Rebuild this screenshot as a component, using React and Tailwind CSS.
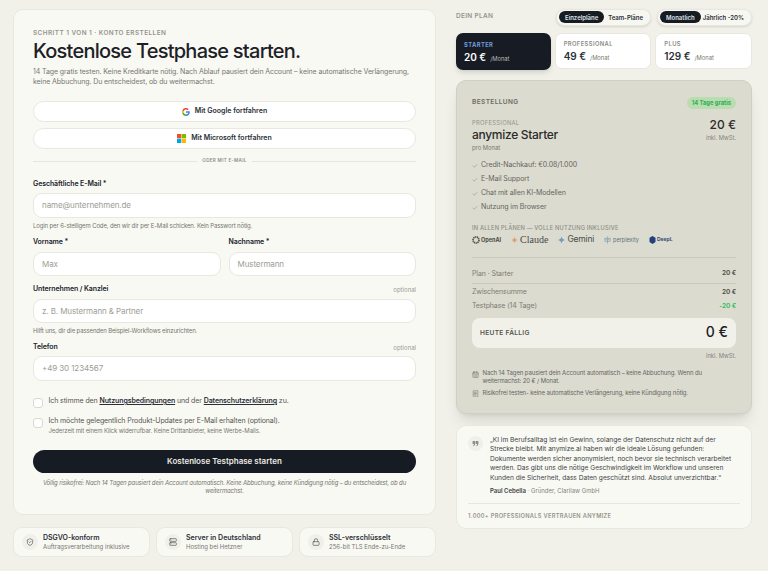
import React from "react";
import { ShieldCheck, Server, Lock, CalendarDays, ReceiptText, Check } from "lucide-react";

function Field({ label, optional, placeholder }) {
  return (
    <div className="flex min-w-0 flex-1 flex-col">
      <div className="flex h-[12px] items-center justify-between">
        <span className="text-[7px] font-semibold tracking-[-0.1px] text-[#20242c]">{label}</span>
        {optional && <span className="text-[6px] text-[#9a9a92]">optional</span>}
      </div>
      <div className="mt-[3px] flex h-[24.5px] items-center rounded-[9px] border border-[#e8e8e0] bg-white px-2 text-[8px] tracking-[-0.1px] text-[#9d9d96]">
        {placeholder}
      </div>
    </div>
  );
}

function Hint({ children }) {
  return <p className="mt-[3px] h-[9px] text-[6px] leading-[9px] tracking-[-0.13px] text-[#75756e]">{children}</p>;
}

function Google() {
  return (
    <svg width="8" height="8" viewBox="0 0 24 24">
      <path fill="#4285F4" d="M23.5 12.3c0-.8-.1-1.6-.2-2.300H12v4.500h6.500a5.500 5.500 0 0 1-2.400 3.600v3h3.900c2.200-2.100 3.500-5.200 3.500-8.800z" />
      <path fill="#34A853" d="M12 24c3.200 0 6-1.100 8-2.900l-3.900-3c-1.100.7-2.500 1.200-4.100 1.200-3.100 0-5.800-2.100-6.700-5H1.300v3.100A12 12 0 0 0 12 24z" />
      <path fill="#FBBC05" d="M5.300 14.300a7.200 7.200 0 0 1 0-4.600V6.600H1.300a12 12 0 0 0 0 10.800z" />
      <path fill="#EA4335" d="M12 4.800c1.800 0 3.400.6 4.600 1.800l3.400-3.400A12 12 0 0 0 1.300 6.600l4 3.100c.9-2.800 3.600-4.900 6.700-4.900z" />
    </svg>
  );
}

function Microsoft() {
  return (
    <svg width="9" height="9" viewBox="0 0 20 20">
      <rect width="9.500" height="9.500" fill="#F25022" />
      <rect x="10.500" width="9.500" height="9.500" fill="#7FBA00" />
      <rect y="10.500" width="9.500" height="9.500" fill="#00A4EF" />
      <rect x="10.500" y="10.500" width="9.500" height="9.500" fill="#FFB900" />
    </svg>
  );
}

function SocialButton({ icon, children }) {
  return (
    <div className="flex h-[21px] items-center justify-center gap-[5px] rounded-full border border-[#e8e8e0] bg-white text-[7px] font-semibold text-[#2b2f36]">
      {icon}
      <span>{children}</span>
    </div>
  );
}

function Badge({ icon, title, sub }) {
  return (
    <div className="flex h-[30px] flex-1 items-center gap-[5px] rounded-[9px] border border-[#e8e8e0] bg-[#f9f9f4] pl-[8px]">
      <div className="flex h-[16px] w-[16px] items-center justify-center rounded-full bg-[#f0f0ea] text-[#55554f]">{icon}</div>
      <div className="flex flex-col">
        <span className="text-[7px] font-semibold leading-[10px] text-[#2b2f36]">{title}</span>
        <span className="text-[6px] leading-[8px] text-[#77776f]">{sub}</span>
      </div>
    </div>
  );
}

function Plan({ name, price, active }) {
  return (
    <div
      className={
        active
          ? "flex h-[37px] flex-1 flex-col justify-center rounded-[7px] bg-[#171c24] pl-[8px] shadow-md"
          : "flex h-[36px] flex-1 flex-col justify-center rounded-[7px] border border-[#e8e8e0] bg-white pl-[8px]"
      }
    >
      <span className={active ? "text-[5.800px] font-bold leading-[9px] tracking-[0.4px] text-[#6e9bdb]" : "text-[5.800px] font-semibold leading-[9px] tracking-[0.4px] text-[#8b8b84]"}>
        {name}
      </span>
      <span className={active ? "mt-[2px] flex items-baseline gap-[4px] text-white" : "mt-[2px] flex items-baseline gap-[4px] text-[#2b2f36]"}>
        <span className="text-[10px] font-semibold leading-[13px]">{price}</span>
        <span className={active ? "text-[5.800px] text-[#b8b8b2]" : "text-[5.800px] text-[#77776f]"}>/Monat</span>
      </span>
    </div>
  );
}

function Toggle({ on, off }) {
  return (
    <div className="flex h-[17px] w-[95px] items-center justify-between whitespace-nowrap rounded-full border border-[#e8e8e0] bg-[#f7f7f2] pl-[2px] pr-[7px] text-[6px] font-semibold text-[#2b2f36] shadow-sm">
      <span className="flex h-[12px] items-center rounded-full bg-[#171c24] px-[6px] text-[#dfe3ea]">{on}</span>
      <span>{off}</span>
    </div>
  );
}

function Row({ label, value, green, className }) {
  return (
    <div className={"flex items-center justify-between text-[7px] tracking-[-0.1px] " + className}>
      <span className="text-[#7b7b72]">{label}</span>
      <span className={green ? "text-[6.500px] font-semibold text-[#2ebd59]" : "text-[6.500px] font-semibold text-[#4a4a45]"}>{value}</span>
    </div>
  );
}

function Feature({ children }) {
  return (
    <div className="flex h-[13.800px] items-center gap-[3px] text-[7px] tracking-[-0.1px] text-[#66665e]">
      <Check size={6} className="mt-[2px] text-[#85857b]" strokeWidth={2} />
      <span>{children}</span>
    </div>
  );
}

export default function App() {
  return (
    <div className="h-[571px] w-[768px] overflow-hidden bg-[#f1f1ea] pl-[13px] pr-[16px] pt-[9px] font-['Inter',sans-serif]">
      <div className="flex items-start gap-[20px]">
        <div className="flex w-[423px] flex-col">
          <section className="flex h-[505.500px] flex-col rounded-[10px] border border-[#e8e8e0] bg-[#f9f9f4] px-[19px] pt-[18px]">
            <p className="text-[6.400px] font-semibold leading-[10px] tracking-[0.45px] text-[#94948c]">SCHRITT 1 VON 1 · KONTO ERSTELLEN</p>
            <h1 className="text-[20px] font-medium leading-[26px] tracking-[-0.75px] text-[#1c2027]">Kostenlose Testphase starten.</h1>
            <p className="mt-[3px] text-[7px] leading-[10px] tracking-[-0.1px] text-[#77776f]">
              14 Tage gratis testen. Keine Kreditkarte nötig. Nach Ablauf pausiert dein Account – keine automatische Verlängerung,<br />
              keine Abbuchung. Du entscheidest, ob du weitermachst.
            </p>
            <div className="mt-[14px] flex flex-col gap-[6px]">
              <SocialButton icon={<Google />}>Mit Google fortfahren</SocialButton>
              <SocialButton icon={<Microsoft />}>Mit Microsoft fortfahren</SocialButton>
            </div>
            <div className="mt-[8px] flex h-[9px] items-center gap-[5px]">
              <div className="h-px flex-1 bg-[#e6e6de]" />
              <span className="text-[4.600px] font-semibold tracking-[0.3px] text-[#8e8e86]">ODER MIT E-MAIL</span>
              <div className="h-px flex-1 bg-[#e6e6de]" />
            </div>

            <div className="mt-[12px]">
              <Field label="Geschäftliche E-Mail *" placeholder="name@unternehmen.de" />
              <Hint>Login per 6-stelligem Code, den wir dir per E-Mail schicken. Kein Passwort nötig.</Hint>
            </div>
            <div className="mt-[7px] flex gap-[8px]">
              <Field label="Vorname *" placeholder="Max" />
              <Field label="Nachname *" placeholder="Mustermann" />
            </div>
            <div className="mt-[7.500px]">
              <Field label="Unternehmen / Kanzlei" optional placeholder="z. B. Mustermann & Partner" />
              <Hint>Hilft uns, dir die passenden Beispiel-Workflows einzurichten.</Hint>
            </div>
            <div className="mt-[6px]">
              <Field label="Telefon" optional placeholder="+49 30 1234567" />
            </div>

            <div className="mt-[15.500px] flex h-[12px] gap-[5.500px]">
              <div className="mt-[2px] h-[10px] w-[10px] rounded-[3px] border border-[#d9d9d0] bg-white" />
              <p className="text-[7px] leading-[10px] tracking-[-0.1px] text-[#55554f]">
                Ich stimme den <span className="font-semibold text-[#2b2f36] underline">Nutzungsbedingungen</span> und der{" "}
                <span className="font-semibold text-[#2b2f36] underline">Datenschutzerklärung</span> zu.
              </p>
            </div>
            <div className="mt-[7.500px] flex gap-[5.500px]">
              <div className="mt-[2px] h-[10px] w-[10px] rounded-[3px] border border-[#d9d9d0] bg-white" />
              <div>
                <p className="text-[7px] leading-[10px] tracking-[-0.1px] text-[#55554f]">Ich möchte gelegentlich Produkt-Updates per E-Mail erhalten (optional).</p>
                <p className="text-[6px] leading-[9px] tracking-[-0.1px] text-[#77776f]">Jederzeit mit einem Klick widerrufbar. Keine Drittanbieter, keine Werbe-Mails.</p>
              </div>
            </div>

            <div className="mt-[15px] flex h-[23.500px] items-center justify-center rounded-full bg-[#171c24] text-[8px] font-semibold text-[#eceae4]">
              Kostenlose Testphase starten
            </div>
            <p className="mx-[6px] mt-[6px] text-center text-[6px] italic leading-[8px] tracking-[-0.13px] text-[#77776f]">
              Völlig risikofrei: Nach 14 Tagen pausiert dein Account automatisch. Keine Abbuchung, keine Kündigung nötig – du entscheidest, ob du weitermachst.
            </p>
          </section>

          <div className="mt-[12px] flex gap-[6px]">
            <Badge icon={<ShieldCheck size={8} />} title="DSGVO-konform" sub="Auftragsverarbeitung inklusive" />
            <Badge icon={<Server size={8} />} title="Server in Deutschland" sub="Hosting bei Hetzner" />
            <Badge icon={<Lock size={8} />} title="SSL-verschlüsselt" sub="256-bit TLS Ende-zu-Ende" />
          </div>
        </div>

        <div className="flex w-[296px] flex-col">
          <div className="flex h-[16px] items-center justify-between">
            <span className="text-[6.500px] font-semibold tracking-[0.3px] text-[#94948c]">DEIN PLAN</span>
            <div className="flex gap-[6px]">
              <Toggle on="Einzelpläne" off="Team-Pläne" />
              <Toggle on="Monatlich" off="Jährlich -20%" />
            </div>
          </div>

          <div className="mt-[8px] flex items-start gap-[4px]">
            <Plan name="STARTER" price="20 €" active />
            <Plan name="PROFESSIONAL" price="49 €" />
            <Plan name="PLUS" price="129 €" />
          </div>

          <section className="mt-[10px] flex h-[334px] flex-col rounded-[10px] border border-[#cfcfc3] bg-[#dbdbd0] px-[15px] pt-[16px] shadow-lg">
            <div className="flex h-[12px] items-center justify-between">
              <span className="text-[6.500px] font-semibold tracking-[0.4px] text-[#6c6c64]">BESTELLUNG</span>
              <span className="flex h-[12px] items-center rounded-full bg-[#b9dcb0] px-[5px] text-[5.800px] font-bold text-[#2fae55]">14 Tage gratis</span>
            </div>
            <div className="mt-[9.500px] flex justify-between">
              <div className="flex flex-col">
                <span className="text-[5.800px] leading-[8px] tracking-[0.3px] text-[#94948a]">PROFESSIONAL</span>
                <span className="text-[12px] font-medium leading-[15px] tracking-[-0.3px] text-[#2b2b29]">anymize Starter</span>
                <span className="mt-[1px] text-[5.800px] leading-[9px] text-[#77776e]">pro Monat</span>
              </div>
              <div className="flex flex-col items-end">
                <span className="-mt-[1.500px] text-[12px] font-medium leading-[16px] text-[#2b2b29]">20 €</span>
                <span className="text-[5.800px] leading-[9px] text-[#85857b]">inkl. MwSt.</span>
              </div>
            </div>

            <div className="mt-[7px] flex flex-col">
              <Feature>Credit-Nachkauf: €0.08/1.000</Feature>
              <Feature>E-Mail Support</Feature>
              <Feature>Chat mit allen KI-Modellen</Feature>
              <Feature>Nutzung im Browser</Feature>
            </div>

            <p className="mt-[10px] text-[5.700px] font-medium leading-[8px] tracking-[0.2px] text-[#8e8e84]">IN ALLEN PLÄNEN — VOLLE NUTZUNG INKLUSIVE</p>
            <div className="mt-[2px] flex h-[12px] items-center gap-[10px] text-[#4a4a47]">
              <span className="flex items-center gap-[1px] text-[5.500px] font-bold">
                <svg width="8" height="8" viewBox="0 0 24 24"><circle cx="12" cy="12" r="9" fill="none" stroke="#55554f" strokeWidth="5" strokeDasharray="4 1.500" /></svg>
                OpenAI
              </span>
              <span className="flex items-center gap-[2px] font-['Liberation_Serif',serif] text-[10px]">
                <svg width="7" height="8" viewBox="0 0 24 24"><path d="M12 1l2.500 8 8-2.500-6 5.500 6 5.500-8-2.500-2.500 8-2.500-8-8 2.500 6-5.500-6-5.500 8 2.500z" fill="#dd9a72" /></svg>
                Claude
              </span>
              <span className="flex items-center gap-[2px] text-[8.500px] tracking-[-0.2px]">
                <svg width="7" height="8" viewBox="0 0 24 24"><path d="M12 0c1 7 4 10.500 12 12-8 1.500-11 5-12 12-1-7-4-10.500-12-12 8-1.500 11-5 12-12z" fill="#3f9be8" /><path d="M12 6c.5 3.500 2 5 6 6-4 1-5.500 2.500-6 6-.5-3.500-2-5-6-6 4-1 5.500-2.500 6-6z" fill="#e58a5a" /></svg>
                Gemini
              </span>
              <span className="flex items-center gap-[2px] text-[5.500px] text-[#64707a]">
                <svg width="7" height="8" viewBox="0 0 20 24" fill="none" stroke="#7fa3ad" strokeWidth="2"><path d="M10 1v22M2 7h16v9H2zM2 7l8 6 8-6" /></svg>
                perplexity
              </span>
              <span className="flex items-center gap-[1px] text-[5px] font-bold text-[#3c4f78]">
                <svg width="7" height="8" viewBox="0 0 20 24"><path d="M10 0l9 5v13l-9 6-9-6V5z" fill="#23407a" /></svg>
                DeepL
              </span>
            </div>

            <div className="mt-[11.500px] border-t border-[#c9c9bd] pt-[7px]">
              <Row label="Plan · Starter" value="20 €" className="h-[19px] border-b border-[#c9c9bd]" />
              <Row label="Zwischensumme" value="20 €" className="h-[17px]" />
              <Row label="Testphase (14 Tage)" value="-20 €" green className="h-[11px]" />
            </div>

            <div className="mt-[6px] flex h-[29.500px] items-center justify-between rounded-[8px] bg-[#f1f1ea] px-[8px]">
              <span className="mt-[3px] text-[6.600px] font-semibold tracking-[0.3px] text-[#55554f]">HEUTE FÄLLIG</span>
              <span className="-mt-[3px] text-[14px] font-medium text-[#1c2027]">0 €</span>
            </div>
            <p className="mt-[3px] text-right text-[5.800px] leading-[9px] text-[#85857b]">inkl. MwSt.</p>

            <div className="mt-[9px] flex gap-[3.500px]">
              <CalendarDays size={7} className="mt-[2px] shrink-0 text-[#77776e]" />
              <p className="text-[6px] leading-[8px] tracking-[-0.1px] text-[#66665e]">
                Nach 14 Tagen pausiert dein Account automatisch – keine Abbuchung. Wenn du weitermachst: 20 € / Monat.
              </p>
            </div>
            <div className="mt-[4px] flex gap-[3.500px]">
              <ReceiptText size={7} className="mt-[1px] shrink-0 text-[#77776e]" />
              <p className="text-[6px] leading-[8px] tracking-[-0.1px] text-[#66665e]">Risikofrei testen- keine automatische Verlängerung, keine Kündigung nötig.</p>
            </div>
          </section>

          <section className="mt-[11px] flex h-[103.500px] flex-col rounded-[10px] border border-[#e8e8e0] bg-[#f9f9f4] px-[11px] pt-[9.500px]">
            <div className="flex gap-[7px]">
              <div className="flex h-[15px] w-[15px] shrink-0 items-center justify-center rounded-full bg-[#f0f0ea]">
                <svg width="7" height="7" viewBox="0 0 24 24" fill="#8e8e86"><path d="M2 3h9v10a8 8 0 0 1-6 8l-1-3c2-.5 3-2 3-4H2zM13 3h9v10a8 8 0 0 1-6 8l-1-3c2-.5 3-2 3-4h-5z" /></svg>
              </div>
              <div>
                <p className="whitespace-nowrap text-[6.600px] leading-[9.500px] text-[#3c3f46]">
                  „KI im Berufsalltag ist ein Gewinn, solange der Datenschutz nicht auf der<br />
                  Strecke bleibt. Mit anymize.ai haben wir die ideale Lösung gefunden:<br />
                  Dokumente werden sicher anonymisiert, noch bevor sie technisch verarbeitet<br />
                  werden. Das gibt uns die nötige Geschwindigkeit im Workflow und unseren<br />
                  Kunden die Sicherheit, dass Daten geschützt sind. Absolut unverzichtbar.“
                </p>
                <p className="mt-[3px] text-[6px] leading-[9px] text-[#85857b]">
                  <span className="font-semibold text-[#3c3f46]">Paul Cebella</span> · Gründer, Clarilaw GmbH
                </p>
              </div>
            </div>
            <div className="mt-[7.500px] border-t border-[#e6e6de] pt-[7px] text-[5.700px] font-semibold leading-[9px] tracking-[0.3px] text-[#94948c]">
              1.000+ PROFESSIONALS VERTRAUEN ANYMIZE
            </div>
          </section>
        </div>
      </div>
    </div>
  );
}
